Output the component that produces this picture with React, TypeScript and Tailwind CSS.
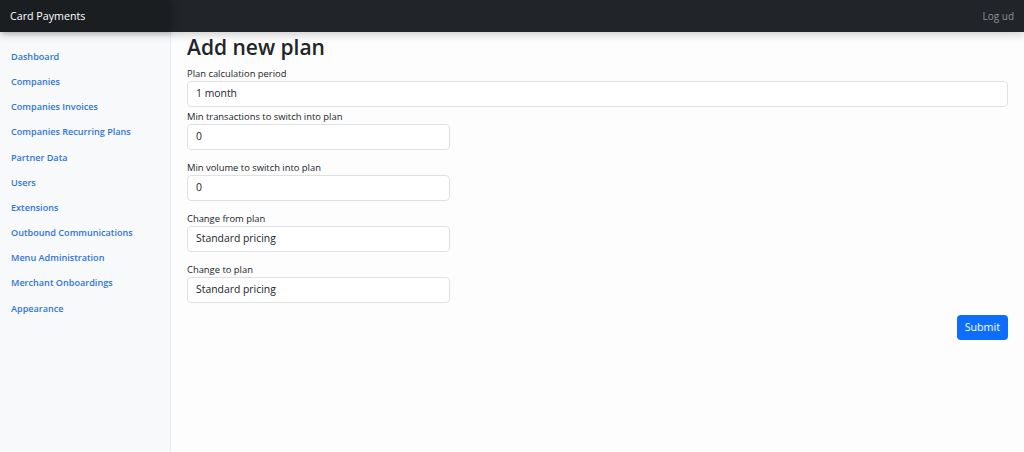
import React from "react";

const links = [
  "Dashboard",
  "Companies",
  "Companies Invoices",
  "Companies Recurring Plans",
  "Partner Data",
  "Users",
  "Extensions",
  "Outbound Communications",
  "Menu Administration",
  "Merchant Onboardings",
  "Appearance",
];

function Field({
  label,
  value,
  wide,
  className,
}: {
  label: string;
  value: string;
  wide?: boolean;
  className?: string;
}) {
  return (
    <div className={className}>
      <label className="block text-[9.4px] leading-[13px] mb-[1px] text-[#212529]">{label}</label>
      <div
        className={`${wide ? "w-full" : "w-[263px]"} h-[26px] flex items-center rounded-[4px] border border-[#dee2e6] bg-white pl-[8px] text-[10.4px] text-[#212529]`}
      >
        {value}
      </div>
    </div>
  );
}

export default function App() {
  return (
    <div
      className="w-[1024px] h-[452px] flex flex-col bg-[#fdfdfd] overflow-hidden"
      style={{ fontFamily: '"Open Sans", "Noto Sans", sans-serif' }}
    >
      <header className="relative z-10 h-[32px] shrink-0 flex bg-[#212529] shadow-[0_3px_8px_rgba(0,0,0,0.18)]">
        <div className="w-[170px] h-full flex items-center pl-[10px] bg-[#1b1e21] shadow-[2px_0_6px_rgba(0,0,0,0.25)] text-[10.7px] text-white">
          Card Payments
        </div>
        <div className="flex-1 flex items-center justify-end pr-[10px] text-[10px] text-[#8e9194]">
          Log ud
        </div>
      </header>
      <div className="flex flex-1 min-h-0">
        <aside className="w-[171px] shrink-0 bg-[#f8f9fa] border-r border-[#e9ebee] pt-[12px]">
          {links.map((l) => (
            <div
              key={l}
              className="h-[25.2px] flex items-center pl-[11px] text-[9.1px] font-semibold text-[#2f74dc]"
            >
              {l}
            </div>
          ))}
        </aside>
        <main className="flex-1 pl-[16px] pr-[16px] pt-[2px]">
          <h2 className="text-[21px] leading-[26px] font-semibold text-[#212529] mb-[7px]">Add new plan</h2>
          <Field label="Plan calculation period" value="1 month" wide className="mb-[3px]" />
          <Field label="Min transactions to switch into plan" value="0" className="mb-[11px]" />
          <Field label="Min volume to switch into plan" value="0" className="mb-[11px]" />
          <Field label="Change from plan" value="Standard pricing" className="mb-[11px]" />
          <Field label="Change to plan" value="Standard pricing" className="mb-[12px]" />
          <div className="flex justify-end">
            <button className="h-[25px] px-[8px] rounded-[4px] bg-[#0d6efd] text-white text-[10.7px]">
              Submit
            </button>
          </div>
        </main>
      </div>
    </div>
  );
}
